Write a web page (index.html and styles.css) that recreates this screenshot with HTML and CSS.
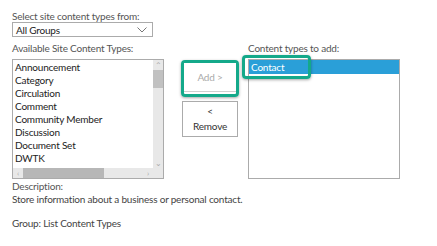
FILE: index.html
```html
<!DOCTYPE html>
<html>
    <head>
        <meta charset="utf-8" />
        <title>Add Content Types</title>
        <link rel="stylesheet" href="styles.css">
    </head>
    <body>
        <!-- 來源群組 -->
        <div class="label">Select site content types from:</div>
        <div class="dropdown">
            <span>All Groups</span>
            <svg class="chevron" width="10" height="6" viewBox="0 0 10 6"><path d="M0.5 0.5 L5 5 L9.5 0.5" fill="none" stroke="#777" stroke-width="1"/></svg>
        </div>

        <!-- 左右清單與按鈕 -->
        <div class="picker">
            <div class="column">
                <div class="label">Available Site Content Types:</div>
                <div class="listbox">
                    <div class="list-body">
                        <div class="items">
                            <div class="item">Announcement</div>
                            <div class="item">Category</div>
                            <div class="item">Circulation</div>
                            <div class="item">Comment</div>
                            <div class="item">Community Member</div>
                            <div class="item">Discussion</div>
                            <div class="item">Document Set</div>
                            <div class="item">DWTK</div>
                        </div>
                        <div class="vscroll">
                            <span class="arrow">&#8963;</span>
                            <div class="vtrack"><div class="vthumb"></div></div>
                            <span class="arrow">&#8964;</span>
                        </div>
                    </div>
                    <div class="hscroll">
                        <span class="arrow">&lsaquo;</span>
                        <div class="htrack"><div class="hthumb"></div></div>
                        <span class="arrow">&rsaquo;</span>
                        <div class="corner"></div>
                    </div>
                </div>
            </div>

            <div class="actions">
                <div class="highlight add-wrap">
                    <button type="button" class="btn add" disabled>Add &gt;</button>
                </div>
                <button type="button" class="btn remove">&lt;<br>Remove</button>
            </div>

            <div class="column">
                <div class="label">Content types to add:</div>
                <div class="listbox target">
                    <div class="item selected">Contact</div>
                    <div class="highlight contact-mark"></div>
                </div>
            </div>
        </div>

        <!-- 說明 -->
        <div class="description">
            <div class="label">Description:</div>
            <div>Store information about a business or personal contact.</div>
            <div class="group">Group: List Content Types</div>
        </div>
    </body>
</html>
```

FILE: styles.css
```css
body {
    margin: 0;
    padding: 10px 0 0 12px;
    font-family: Lato, "Open Sans", sans-serif;
    font-size: 10px;
    letter-spacing: -0.2px;
    color: #444;
    background-color: white;
}

.label {
    color: #555;
    line-height: 12px;
}

/* 下拉選單 */
.dropdown {
    box-sizing: border-box;
    width: 141px;
    height: 15px;
    border: 1px solid #ababab;
    display: flex;
    align-items: center;
    justify-content: space-between;
    padding: 0 5px 0 3px;
    color: #222;
    margin-bottom: 5px;
}

.chevron {
    display: block;
}

/* 主區塊 */
.picker {
    display: flex;
    align-items: flex-start;
}

.column .label {
    margin-bottom: 5px;
}

.listbox {
    box-sizing: border-box;
    width: 152px;
    height: 120px;
    border: 1px solid #ababab;
    color: #222;
    position: relative;
}

.list-body {
    display: flex;
    height: 108px;
}

.items {
    flex: 1;
    padding-top: 1px;
}

.item {
    height: 13px;
    line-height: 13px;
    padding-left: 2px;
    white-space: nowrap;
}

/* 捲軸 */
.vscroll {
    width: 10px;
    background-color: #e8e8e8;
    display: flex;
    flex-direction: column;
    align-items: center;
}

.vtrack {
    flex: 1;
    width: 100%;
}

.vthumb {
    height: 18px;
    background-color: #c1c1c1;
}

.arrow {
    color: #aaa;
    font-size: 8px;
    line-height: 10px;
    height: 10px;
    width: 10px;
    text-align: center;
}

.hscroll {
    display: flex;
    height: 10px;
    background-color: #e8e8e8;
}

.htrack {
    flex: 1;
}

.hthumb {
    width: 81px;
    height: 10px;
    background-color: #b7b7b7;
}

.corner {
    width: 10px;
    background-color: #e8e8e8;
}

/* 中間按鈕 */
.actions {
    display: flex;
    flex-direction: column;
    align-items: center;
    gap: 4px;
    width: 58px;
    margin: 18px 9px 0 17px;
}

.btn {
    box-sizing: border-box;
    font-family: inherit;
    font-size: 10px;
    letter-spacing: inherit;
    background-color: white;
    border: 1px solid #ababab;
    width: 56px;
    padding: 0;
    cursor: pointer;
}

.btn.add {
    color: #aaa;
    height: 29px;
    border: none;
    border-bottom: 1px solid #cfcfcf;
    width: 52px;
}

.btn.remove {
    color: #333;
    height: 36px;
    line-height: 15px;
}

/* 綠色醒目框 */
.highlight {
    box-sizing: border-box;
    border: 3px solid #14a98a;
    border-radius: 4px;
    box-shadow: 0 1px 3px rgba(0, 0, 0, 0.35);
}

.add-wrap {
    width: 58px;
    height: 37px;
    display: flex;
    align-items: flex-start;
    justify-content: center;
}

.target .item.selected {
    background-color: #2a9fd8;
    color: white;
    height: 14px;
    line-height: 14px;
}

.contact-mark {
    position: absolute;
    left: -7px;
    top: -5px;
    width: 69px;
    height: 24px;
}

/* 說明 */
.description {
    margin-top: 1px;
    line-height: 15px;
}

.description .group {
    margin-top: 9px;
}
```
